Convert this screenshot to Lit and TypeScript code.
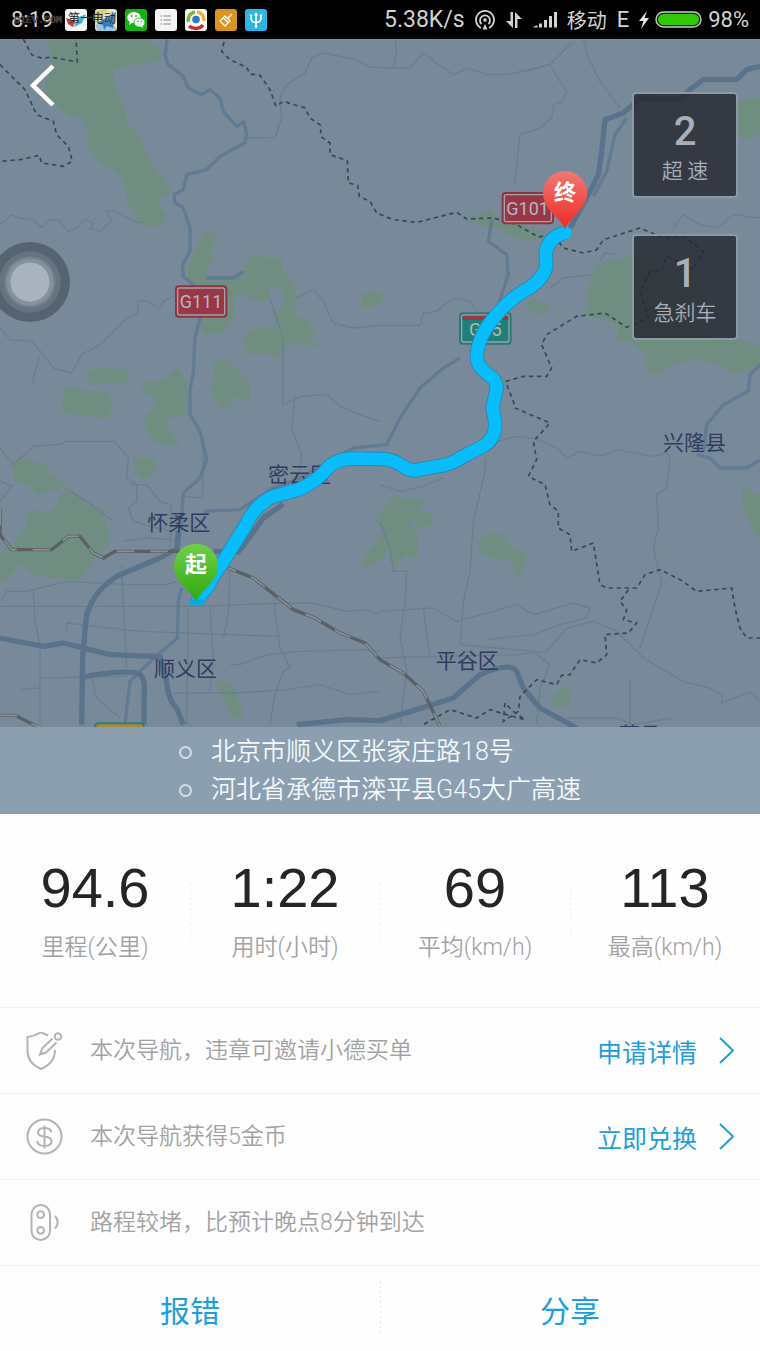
import { LitElement, html, svg, css, nothing } from "lit";
import { customElement } from "lit/decorators.js";

const stats = [
  { value: "94.6", label: "里程(公里)" },
  { value: "1:22", label: "用时(小时)" },
  { value: "69", label: "平均(km/h)" },
  { value: "113", label: "最高(km/h)" },
];

const alerts = [
  { count: "2", label: "超 速" },
  { count: "1", label: "急刹车" },
];

const shieldIcon = svg`
  <path d="M22 3.500 Q15 0 14.500 0.500 Q9 4 1.500 5 V19 Q1.500 31 15 37 Q29 31 29 18"/>
  <path d="M26.500 6.500 16 16.500 14 22.500 20 20.500 30.500 10.500"/>
  <circle cx="32" cy="4.500" r="3.300"/>`;

const coinIcon = svg`
  <circle cx="18.500" cy="18.500" r="17"/>
  <path d="M18.500 7.500V30.500M25.500 14.500Q24.500 10 18.500 10T12 14.300Q12 18 18.500 18.600T25.600 23.300Q25.600 28 18.500 28T11.500 23"/>`;

const trafficIcon = svg`
  <rect x="5.500" y="1" width="18.500" height="35" rx="9.200"/>
  <circle cx="14.700" cy="10.700" r="3.400"/>
  <circle cx="14.700" cy="26.300" r="3.400"/>
  <path d="M29 12Q34.500 18 29 24.500"/>`;

const notices = [
  { icon: shieldIcon, text: "本次导航，违章可邀请小德买单", action: "申请详情" },
  { icon: coinIcon, text: "本次导航获得5金币", action: "立即兑换" },
  { icon: trafficIcon, text: "路程较堵，比预计晚点8分钟到达", action: "" },
];

@customElement("status-bar")
class StatusBar extends LitElement {
  static styles = css`
    :host {
      display: flex;
      position: relative;
      align-items: center;
      justify-content: space-between;
      height: 39px;
      padding: 0 11px;
      background: #000;
      color: #d2d2d2;
      font: 22px/39px Roboto, "Noto Sans CJK SC", sans-serif;
    }
    .apps, .system { display: flex; align-items: center; }
    .apps { gap: 8px; }
    .time { margin-right: 4px; }
    .system { gap: 10px; }
    .speed { font-size: 23px; }
    .carrier { font-size: 20px; font-family: "Noto Sans CJK SC", sans-serif; }
    .power { display: flex; align-items: center; gap: 6px; }
    svg { display: block; }
    .mark {
      position: absolute;
      left: 14px;
      top: 13px;
      white-space: pre;
      color: #2a2a2a;
      font: 10px/14px "Liberation Mono", "Noto Sans CJK SC", monospace;
      text-shadow: 0 0 1px #b0b0b0;
    }
    .mark span { font-size: 12px; }
  `;

  render() {
    return html`
      <div class="apps">
        <span class="time">8:19</span>
        <svg width="22" height="22" viewBox="0 0 22 22"><rect width="22" height="22" rx="3" fill="#f4f4f2"/><path d="M1 9 10 12 8 18 3 15Z" fill="#d8332f"/><path d="M21 5 12 9 9 18 17 14Z" fill="#3cb6cf"/></svg>
        <svg width="22" height="22" viewBox="0 0 22 22"><rect width="22" height="22" rx="3" fill="#e6e2c4"/><path d="M0 3 8 0H13L0 15Z" fill="#e4c86a"/><path d="M0 16 10 12 22 19 19 22H3Z" fill="#9ec4dd"/><path d="M21 3 2 14 8 16 9 21 12 17 18 19Z" fill="#2c7fc6"/></svg>
        <svg width="22" height="22" viewBox="0 0 22 22"><rect width="22" height="22" rx="3" fill="#12b312"/><ellipse cx="9" cy="8.500" rx="6.700" ry="5.600" fill="#fff"/><path d="M5 12 4 16 8 13.500Z" fill="#fff"/><ellipse cx="14.500" cy="13.500" rx="5.500" ry="4.600" fill="#e9f7e9" stroke="#12b312" stroke-width=".8"/><path d="M15 17 18 19 17.500 16Z" fill="#e9f7e9"/><g fill="#12b312"><circle cx="6.800" cy="7" r=".9"/><circle cx="11" cy="7" r=".9"/><circle cx="12.800" cy="12.500" r=".7"/><circle cx="16.300" cy="12.500" r=".7"/></g></svg>
        <svg width="22" height="22" viewBox="0 0 22 22"><rect width="22" height="22" rx="3" fill="#f4f4f4"/><path d="M5.500 7H7M8.500 7H16M5.500 11H7M8.500 11H16M5.500 15H7M8.500 15H16" stroke="#888" stroke-width="1.200"/></svg>
        <svg width="22" height="22" viewBox="0 0 22 22"><rect width="22" height="22" rx="3" fill="#f7f7f5"/><g fill="none" stroke-width="3.400"><path d="M3.500 13A8 8 0 0 1 10 3" stroke="#79b93c"/><path d="M12 3A8 8 0 0 1 19 12" stroke="#e9b52b"/><path d="M18 16A9 8 0 0 1 4 17" stroke="#cf2b28"/></g><circle cx="11" cy="10.500" r="3.800" fill="#2f78c4"/></svg>
        <svg width="22" height="22" viewBox="0 0 22 22"><rect width="22" height="22" rx="3" fill="#dc931f"/><g fill="none" stroke="#fff" stroke-width="1.300" stroke-linejoin="round"><path d="M17 5 13 9M10 7 15 12 10 17 5 12ZM8.500 9 13.500 14"/></g></svg>
        <svg width="22" height="22" viewBox="0 0 22 22"><rect width="22" height="22" rx="3" fill="#2fb4e6"/><path d="M11 5V18M6 6V9Q6 13.500 11 13.500T16 9V6" fill="none" stroke="#fff" stroke-width="1.600"/><path d="M11 3 9 6.500H13ZM4.500 7 6 4.500 7.500 7ZM14.500 7 16 4.500 17.500 7Z" fill="#fff"/><circle cx="11" cy="17.500" r="1.500" fill="#fff"/></svg>
      </div>
      <div class="system">
        <span class="speed">5.38K/s</span>
        <svg width="20" height="20" viewBox="0 0 20 20" fill="none" stroke="#d2d2d2" stroke-width="1.800"><path d="M6 18A9 9 0 1 1 14 18"/><path d="M6.500 14A5 5 0 1 1 13.500 14"/><circle cx="10" cy="10" r="1.800" fill="#d2d2d2" stroke="none"/><path d="M10 14 7.500 19.500H12.500Z" fill="#d2d2d2" stroke="none"/></svg>
        <svg width="18" height="18" viewBox="0 0 18 18" fill="#d2d2d2"><path d="M5.500 1H8V17L1 10H5.500Z"/><path d="M12.500 17H10V1L17 8H12.500Z"/></svg>
        <svg width="24" height="16" viewBox="0 0 24 16" fill="#d2d2d2"><path d="M0 15.500H4.500V13.500H3ZM6 15.500H9V11.500H6ZM11 15.500H14V8H11ZM16 15.500H19V4H16ZM21 15.500H24V0H21Z"/></svg>
        <span class="carrier">移动</span>
        <span>E</span>
        <span class="power">
          <svg width="10" height="18" viewBox="0 0 10 18" fill="#e8e8e8"><path d="M8 0 0 10H4.500L2 18 10 7H5.500Z"/></svg>
          <svg width="47" height="17" viewBox="0 0 47 17"><rect x="1" y="1" width="45" height="15" rx="7.500" fill="#0a2a00" stroke="#c4cfc2" stroke-width="1.400"/><rect x="3" y="3" width="41" height="11" rx="5.500" fill="#31c806"/></svg>
          <span>98%</span>
        </span>
      </div>
      <div class="mark">D1EV.COM <span>第一电动</span></div>
    `;
  }
}

@customElement("route-map")
class RouteMap extends LitElement {
  static styles = css`
    :host { display: block; position: relative; overflow: hidden; background: #788a99; }
    .canvas { display: block; width: 100%; height: auto; }
    .wood { fill: #6f8e81; }
    .thin { fill: none; stroke: #6b7e90; stroke-width: 4; }
    .road { fill: none; stroke: #617b94; stroke-width: 10; stroke-linejoin: round; }
    .major { fill: none; stroke: #5a738d; stroke-width: 16; stroke-linejoin: round; }
    .border { fill: none; stroke: #384759; stroke-width: 5; stroke-dasharray: 13 11; }
    .rail { fill: none; stroke: #5b6064; stroke-width: 10; }
    .rail-gap { fill: none; stroke: #87919a; stroke-width: 5; stroke-dasharray: 52 48; }
    .route-edge { fill: none; stroke: #2d84ad; stroke-width: 43; stroke-linejoin: round; }
    .route { fill: none; stroke: #07bdfb; stroke-width: 38; stroke-linejoin: round; }
    .place { fill: #2f3c60; font: 63px "Noto Sans CJK SC", sans-serif; }
    .sign { fill: #b1b8c0; font: 54px Roboto, sans-serif; text-anchor: middle; }
    .pin { fill: #fff; font: 700 66px "Noto Sans CJK SC", sans-serif; text-anchor: middle; }
    .back {
      position: absolute;
      left: 20px;
      top: 20px;
      padding: 4px 10px;
      border: 0;
      background: none;
    }
    .back svg { display: block; }
    .ball {
      position: absolute;
      left: -10px;
      top: 203px;
      width: 80px;
      height: 80px;
      padding: 0;
      border: 0;
      border-radius: 50%;
      background: radial-gradient(circle, #a9b3bd 19px, #84919e 20px 23px, #748290 24px 25px, #667482 26px 30px, #566371 31px);
    }
    .alerts {
      position: absolute;
      right: 22px;
      top: 53px;
      display: grid;
      gap: 36px;
    }
    .alert {
      box-sizing: border-box;
      width: 106px;
      height: 106px;
      padding: 16px 0 0;
      border: 2px solid #8d9aa5;
      border-radius: 4px;
      background: rgba(36, 39, 49, 0.82);
      color: #a9afb7;
      text-align: center;
      font-family: "Noto Sans CJK SC", sans-serif;
    }
    .count { font: 500 40px/44px Roboto, sans-serif; }
    .kind { font-size: 21px; line-height: 30px; }
  `;

  private route =
    "M590 1696 603 1668 622 1648 Q640 1610 670 1570L735 1465Q765 1400 820 1375L895 1355Q940 1335 970 1305Q1000 1262 1060 1262L1145 1263Q1180 1264 1205 1282Q1235 1305 1265 1293L1330 1282Q1360 1275 1390 1255L1450 1224Q1490 1200 1485 1150L1478 1110 1490 1050Q1490 1025 1465 1010Q1425 980 1431 950Q1435 890 1490 830Q1530 780 1595 745Q1640 710 1639 675L1637 650Q1640 600 1695 584";

  render() {
    return html`
      <svg class="canvas" viewBox="0 3 2280 2064" role="img" aria-label="行程地图">
        <defs>
          <linearGradient id="red" x2="0" y2="1"><stop stop-color="#ee7a74"/><stop offset="1" stop-color="#ee2a22"/></linearGradient>
          <linearGradient id="green" x2="0" y2="1"><stop stop-color="#6fd04a"/><stop offset="1" stop-color="#2fa80c"/></linearGradient>
        </defs>
        <rect y="3" width="2280" height="2064" fill="#788a99"/>
        ${this.woods()} ${this.roads()}
        <text class="place" x="804" y="1333">密云区</text>
        <text class="place" x="442" y="1477">怀柔区</text>
        <text class="place" x="462" y="1914">顺义区</text>
        <text class="place" x="1307" y="1890">平谷区</text>
        <text class="place" x="1989" y="1237">兴隆县</text>
        <text class="place" x="1856" y="2112">蓟县</text>
        ${this.signs()}
        <path class="route-edge" d=${this.route}/>
        <path class="route" d=${this.route}/>
        <circle cx="1696" cy="584" r="19" fill="#07bdfb"/>
        <path d="M568 1684H612V1702H568Z" fill="#0aa9e2"/>
        ${this.pin(588, 1583, "url(#green)", "起")}
        ${this.pin(1695, 465, "url(#red)", "终")}
      </svg>
      <button class="back" aria-label="返回">
        <svg width="26" height="46" viewBox="0 0 26 46"><path d="M23 3 3 22.500 23 42" fill="none" stroke="#fff" stroke-width="4.500"/></svg>
      </button>
      <button class="ball" aria-label="悬浮球"></button>
      <div class="alerts">
        ${alerts.map((a) => html`<div class="alert"><div class="count">${a.count}</div><div class="kind">${a.label}</div></div>`)}
      </div>
    `;
  }

  private pin(x: number, y: number, fill: string, label: string) {
    return svg`<g transform="translate(${x} ${y})">
      <path d="M0 108C-14 72-66 52-66 0A66 66 0 1 1 66 0C66 52 14 72 0 108Z" fill=${fill}/>
      <text class="pin" y="20">${label}</text>
    </g>`;
  }

  private signs() {
    return svg`
      <g stroke="#a4a0a8" stroke-width="4">
        <rect x="527" y="744" width="153" height="93" rx="10" fill="#9a3746" stroke="#8c3341"/>
        <rect x="533" y="750" width="141" height="81" rx="6" fill="#9a3746"/>
        <rect x="1507" y="464" width="153" height="93" rx="10" fill="#9a3746" stroke="#8c3341"/>
        <rect x="1513" y="470" width="141" height="81" rx="6" fill="#9a3746"/>
        <rect x="1379" y="825" width="154" height="93" rx="10" fill="#1f7f79" stroke="#1f7f79"/>
        <rect x="1385" y="831" width="142" height="81" rx="6" fill="#1f7f79"/>
        <path d="M1387 833H1525V846H1387Z" fill="#9a3746" stroke="none"/>
        <rect x="286" y="2056" width="145" height="60" rx="8" fill="#a68a3a" stroke="#2b7f80" stroke-width="6"/>
      </g>
      <text class="sign" x="603" y="811">G111</text>
      <text class="sign" x="1583" y="531">G101</text>
      <text class="sign" x="1456" y="894">G45</text>`;
  }

  private woods() {
    return svg`<g class="wood">
      <path d="M150 3H440L455 18 478 25 485 65 430 78 385 82 345 97 340 130 355 165 375 215 385 260 410 285 430 310 435 340 460 385 500 430 515 462 480 480 478 510 500 525 485 560 450 568 415 555 395 515 380 480 372 430 350 405 300 375 258 320 265 280 240 232 215 240 170 205 130 160 155 70 145 30Z"/>
      <path d="M620 578 650 590 645 615 630 640 640 655 625 690 615 715 640 712 690 720 720 708 730 680 770 645 800 660 845 662 848 700 880 730 893 780 885 830 920 845 948 875 930 895 960 932 925 918 880 920 850 925 835 965 800 945 750 950 725 915 745 880 780 866 830 870 820 820 840 815 855 790 840 750 810 745 805 785 760 790 715 765 700 790 705 830 670 880 620 893 600 870 600 740 570 735 560 700 585 630Z"/>
      <path d="M260 1000 300 990 380 993 383 1030 375 1037 270 1040Z"/>
      <path d="M640 970 680 965 710 995 750 1035 750 1080 735 1090 720 1075 700 1080 690 1105 670 1115 640 1080 630 1045 645 1010Z"/>
      <path d="M420 1035 490 1025 530 990 560 1020 565 1130 505 1140 500 1165 540 1222 490 1225 450 1200 435 1160 435 1130 465 1110 465 1080 430 1065Z"/>
      <path d="M190 1055 210 1045 250 1055 325 1062 338 1100 320 1140 285 1138 225 1130 185 1120Z"/>
      <path d="M1085 770 1110 758 1145 765 1146 792 1110 810 1085 810Z"/>
      <path d="M35 1270 80 1263 135 1280 145 1300 205 1345 165 1355 120 1370 85 1345 45 1330Z"/>
      <path d="M400 1260 465 1258 470 1295 430 1322 402 1300Z"/>
      <path d="M0 1545 45 1510 75 1470 85 1425 110 1415 140 1430 175 1400 175 1370 210 1358 245 1385 255 1400 310 1410 330 1520 300 1545 270 1585 235 1630 200 1625 150 1620 100 1610 60 1580 10 1635 0 1630Z"/>
      <path d="M1145 1420 1180 1375 1210 1380 1275 1385 1255 1415 1295 1425 1298 1460 1265 1470 1235 1450 1230 1455 1255 1500 1250 1560 1220 1550 1205 1570 1175 1580 1160 1540 1145 1565 1090 1590 1095 1545 1130 1510 1150 1480 1125 1445Z"/>
      <path d="M1425 1510 1460 1490 1500 1483 1520 1500 1530 1530 1570 1535 1577 1560 1565 1610 1545 1620 1545 1590 1520 1565 1490 1565 1445 1548Z"/>
      <path d="M645 1930 675 1932 700 1950 720 1995 733 2030 700 2045 680 2000Z"/>
      <path d="M1655 1985 1670 1960 1695 1945 1712 1955 1710 2000 1660 2010Z"/>
      <path d="M1390 545 1440 525 1475 515 1490 545 1560 560 1620 580 1640 600 1595 610 1540 600 1500 575Z"/>
      <path d="M1570 800 1600 783 1645 800 1640 830 1600 825Z"/>
      <path d="M2200 185 2280 180V285L2240 305 2200 285 2190 250Z"/>
      <path d="M1795 670 1840 665 1880 655 1910 660 1960 660 2020 690 2090 700 2150 720 2130 760 2040 800 2090 860 2160 905 2205 900 2280 925V980L2200 1008 2165 985 2100 965 2010 980 1985 1005 1945 1005 1935 950 1895 915 1850 910 1855 870 1835 855 1750 830 1765 800 1765 740Z"/>
      <path d="M2225 1345 2280 1370V1510L2255 1470 2230 1410Z"/>
      <path d="M1140 750 1150 790 1140 800Z"/>
    </g>`;
  }

  private roads() {
    return svg`
      <g class="thin">
        <path d="M0 560 35 530 60 540 100 545 125 568 150 545 175 545 205 580 230 570 255 545 280 555 270 572 300 580 335 550 320 520 345 518 400 550 430 555"/>
        <path d="M0 870 30 905 95 910 130 950 160 990 215 1005 245 950 300 920 350 870 380 840 412 830 415 790 440 788 480 812 490 790 530 770"/>
        <path d="M120 950 95 1040M740 300 825 298 845 240 840 180 860 140 915 105 935 60 970 45 1070 65 1110 88 1230 90 1270 45 1330 90 1360 110 1400 90 1460 110 1520 110 1600 95 1650 80 1680 130 1700 160 1690 190 1660 200 1655 240 1620 270 1560 290 1555 330 1545 440"/>
        <path d="M1185 3 1190 50 1180 90M1520 110 1650 80 1715 15M1750 3 1765 60 1800 130 1860 210"/>
        <path d="M890 780 940 755 970 790 1000 855 1060 870 1140 862 1260 862 1270 825 1310 820 1360 780 1410 790 1430 820"/>
        <path d="M810 780 825 830 850 900 850 1100 900 1075 980 1070 1020 1105 1080 1130 1140 1150M885 1075 875 1170 905 1250 900 1300"/>
        <path d="M2020 570 2050 530 2100 560 2150 570 2200 530 2280 540M1800 670 1815 645 1850 650M1650 750 1690 720 1780 710"/>
        <path d="M0 1230 40 1280 100 1225 180 1218 200 1210 345 1210 385 1260 380 1320 410 1340 410 1390 385 1410 400 1450 470 1470 520 1480M195 1350 260 1390 340 1450M0 1328 35 1345 0 1390"/>
        <path d="M390 1340 440 1340 480 1390 515 1400 510 1530M610 1230 608 1380 550 1375M370 1510 440 1500 520 1505"/>
        <path d="M0 1690 20 1660 80 1660 120 1650 200 1630 380 1640 500 1640 530 1630M0 1705H580L860 1695 940 1695 1040 1720 1100 1715 1140 1730"/>
        <path d="M100 1660 105 1750 120 1820 120 2060M365 1580 370 1700 375 1800 380 1890M200 1755 420 1780 840 1795M200 1780V1755"/>
        <path d="M565 1710 560 2060M630 1700 640 1870 630 1960M690 1590 685 1730 670 1800M820 1670 830 1760 840 1830 870 1890 850 1900 825 1970 810 2060"/>
        <path d="M690 1880 720 1880 800 1850 900 1840 1100 1835 1140 1840M520 1965 700 1965 860 1955 960 1940 1050 1970 1140 1960M60 1955 120 1950M120 1920 380 1915M270 1900 290 1980 360 2040"/>
        <path d="M1455 1260 1455 1300 1420 1450 1410 1600 1390 1690 1380 1820M1490 1210 1550 1195 1600 1200 1670 1230 1700 1260 1740 1240 1800 1255 1850 1235 1960 1255 2000 1245 2010 1260 2000 1350 1970 1370 1975 1470 1960 1530 1985 1640 1960 1710 1920 1830"/>
        <path d="M1140 1450 1170 1530 1180 1600 1220 1600 1215 1690 1200 1800 1220 1900 1200 2060M1140 1720 1300 1710 1370 1750 1480 1720 1550 1700 1600 1730 1720 1695 1770 1710 1760 1740 1680 1760 1600 1790 1460 1805M1140 1860 1300 1855 1550 1850 1640 1840 1700 1770 1780 1750 1850 1780 1930 1860 2050 1930 2130 1950 2165 1970V2000M1380 1820 1600 1840 1650 1880M1890 1925 1890 2060M2165 1995 2250 1962 2280 1990M1270 1710 1290 1860M1650 1880 1620 1950 1610 2060M1700 2040 1850 2040 1900 2060 2020 2040"/>
        <path d="M1140 1340 1200 1360 1270 1345 1330 1320"/>
      </g>
      <g class="road">
        <path d="M502 3 495 50 505 80 550 115 565 150 605 170 630 155 660 180 670 220 710 265 732 250 740 290 735 315 660 355 620 395 560 410 550 455 522 470 525 495 550 510 570 570 570 640 548 680 550 715 590 750 600 840 585 900 580 1000 570 1060 570 1130 600 1180 620 1265 600 1320 550 1365 545 1440 535 1530"/>
        <path d="M1475 545 1465 610 1520 650 1525 710 1485 830M1380 960 1330 990 1260 1050 1200 1140 1160 1220 1060 1230 900 1320 820 1350 720 1415 610 1420"/>
        <path d="M1880 240 1845 290 1820 400 1780 475M620 720 700 720 730 700M2280 980 2250 1010 2245 1060 2170 1100 2120 1160 2110 1240M2090 1250 2130 1260 2160 1290 2240 1290 2280 1265"/>
        <path d="M545 1650 535 1690 532 1800 480 1845 430 1890 390 1930 375 2060"/>
      </g>
      <g class="major">
        <path d="M2280 85 2240 95 2210 125 2110 125 2070 155 2040 185 1920 180 1870 225 1815 245 1805 340 1795 410 1760 480 1710 570"/>
        <path d="M245 2060 248 1850 260 1730Q285 1650 360 1610L480 1560 535 1530M850 1398 790 1440 740 1510 715 1542 640 1540M535 1480 530 1540"/>
        <path d="M0 1800 130 1825 190 1815 330 1850 480 1856 500 1930Q505 1990 530 2010L550 2060M240 1920Q320 1900 400 1903 430 1905 433 1940L432 2060"/>
        <path d="M890 2060 1040 2045 1140 2048 1240 2018 1360 1980 1440 1910Q1530 1870 1550 1900L1570 1950 1620 2010 1730 2070"/>
      </g>
      <g class="rail">
        <path id="rail-west" d="M0 1410V1490L35 1535H155L205 1495 240 1495 280 1545 310 1560 345 1540H540"/>
        <path id="rail-east" d="M660 1580 760 1620 880 1715 945 1740 1020 1785 1095 1815 1140 1865 1210 1905 1270 1960 1320 2065"/>
        <path id="rail-south" d="M0 2032H45L110 2065"/>
      </g>
      <use href="#rail-west" class="rail-gap"/>
      <use href="#rail-east" class="rail-gap"/>
      <use href="#rail-south" class="rail-gap"/>
      <g class="border">
        <path d="M70 3 95 50 130 62 150 57 232 72 228 3M0 80 75 155 110 230 160 250 170 290 205 325 217 370 190 385 125 375 118 352 60 365 0 370"/>
        <path d="M672 12 665 40 690 65 740 88 750 108 780 112 810 155 828 205 850 190 915 210 930 240 962 262 962 295 990 315 990 350 1042 368 1045 435 1073 442 1078 475 1110 490 1130 525 1180 545 1250 553 1370 523 1400 543 1480 540 1550 560 1615 597 1660 590 1690 630 1750 645 1790 635 1810 605 1920 570 1990 600 2050 595 2110 640 2080 695 2000 655 1985 700 1950 700 1920 760 1945 840 1880 868 1815 825 1730 835 1640 890 1625 920 1655 990 1640 1015 1570 1015 1518 1030 1525 1052 1540 1090 1545 1110 1650 1155 1600 1210 1610 1265 1585 1315 1635 1340 1650 1400 1675 1420 1675 1470 1710 1490 1715 1540 1780 1515 1800 1640 1820 1650 1910 1650 1935 1610 1980 1595 2040 1625 2090 1660 2195 1650 2205 1710 2220 1770 2240 1800 2280 1800"/>
        <path d="M1885 1655 1860 1690 1880 1715 1870 1745 1910 1755 1885 1785 1815 1790 1820 1850 1790 1875 1740 1865 1710 1910 1685 1912 1670 1940 1610 1925 1560 1975 1555 2020 1510 2050 1515 1995 1540 2020 1575 2045 1520 2030 1470 2015 1430 2040 1350 2015 1270 2060"/>
      </g>`;
  }
}

@customElement("app-root")
class AppRoot extends LitElement {
  static styles = css`
    :host {
      display: flex;
      flex-direction: column;
      min-height: 100vh;
      background: #fefefe;
      color: #a2a2a2;
      font: 350 23px/32px Roboto, "Noto Sans CJK SC", sans-serif;
    }
    .places {
      display: grid;
      justify-content: center;
      margin: 0;
      padding: 6px 0 5px;
      list-style: none;
      background: #8c9fb1;
      color: #f4f8fb;
      font-size: 25px;
      line-height: 38px;
    }
    .places li { display: flex; align-items: center; gap: 19px; }
    .dot {
      box-sizing: border-box;
      width: 13px;
      height: 13px;
      border: 2px solid #d3dee8;
      border-radius: 50%;
    }
    .stats {
      display: grid;
      grid-template-columns: repeat(4, 1fr);
      margin: 0;
      padding: 42px 0 43px;
    }
    .stat {
      display: flex;
      flex-direction: column-reverse;
      justify-content: flex-end;
      text-align: center;
    }
    .stat + .stat {
      background: repeating-linear-gradient(#ececec 0 2px, transparent 2px 5px) 0 27px / 1px 57px no-repeat;
    }
    .value { margin: 0; color: #252525; font: 56px/64px "Liberation Sans", sans-serif; }
    .label { padding-top: 12px; }
    .notices { margin: 0; padding: 0; list-style: none; }
    .notice {
      display: flex;
      align-items: center;
      height: 85px;
      padding: 0 26px;
      border-top: 1px solid #f1f1f1;
    }
    .icon { flex: none; margin-right: 27px; fill: none; stroke: #b4b4b4; stroke-width: 2; }
    .message { flex: 1; }
    .more {
      display: flex;
      align-items: center;
      gap: 22px;
      color: #1d9fdb;
      font: 25px/32px "Noto Sans CJK SC", sans-serif;
      text-decoration: none;
    }
    .actions {
      display: grid;
      flex: 1;
      grid-template-columns: 1fr 1fr;
      min-height: 84px;
      border-top: 1px solid #f1f1f1;
    }
    .action {
      padding: 0;
      border: 0;
      background: none;
      color: #1d9fdb;
      font: 30px/40px "Noto Sans CJK SC", sans-serif;
    }
    .action + .action {
      background: repeating-linear-gradient(#e4e4e4 0 2px, transparent 2px 5px) 0 15px / 1px 56px no-repeat;
    }
  `;

  render() {
    return html`
      <status-bar></status-bar>
      <route-map></route-map>
      <ul class="places">
        <li><span class="dot"></span>北京市顺义区张家庄路18号</li>
        <li><span class="dot"></span>河北省承德市滦平县G45大广高速</li>
      </ul>
      <dl class="stats">
        ${stats.map((s) => html`<div class="stat"><dt class="label">${s.label}</dt><dd class="value">${s.value}</dd></div>`)}
      </dl>
      <ul class="notices">
        ${notices.map(
          (n) => html`<li class="notice">
            <svg class="icon" width="37" height="38" viewBox="0 0 37 38">${n.icon}</svg>
            <span class="message">${n.text}</span>
            ${n.action
              ? html`<a class="more" href="#">${n.action}<svg width="15" height="27" viewBox="0 0 15 27"><path d="M1 1 14 13.500 1 26" fill="none" stroke="#1d9fdb" stroke-width="2"/></svg></a>`
              : nothing}
          </li>`
        )}
      </ul>
      <div class="actions">
        <button class="action">报错</button>
        <button class="action">分享</button>
      </div>
    `;
  }
}
